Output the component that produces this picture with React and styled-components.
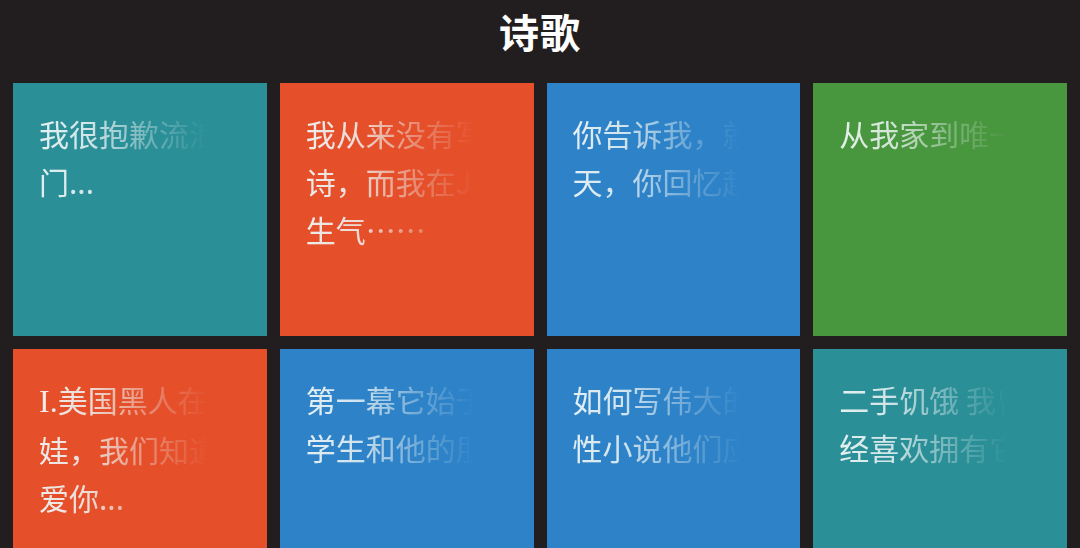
import React from "react";
import styled, { createGlobalStyle } from "styled-components";

const GlobalStyle = createGlobalStyle`
  html, body {
    margin: 0;
    padding: 0;
    background: #221e1f;
  }
  body {
    font-family: "Noto Sans CJK SC", "Noto Sans", sans-serif;
  }
`;

const Page = styled.div`
  width: 1080px;
  height: 548px;
  overflow: hidden;
  background: #221e1f;
`;

const Header = styled.header`
  height: 83px;
  display: flex;
  align-items: center;
  justify-content: center;
  padding-bottom: 22px;
  box-sizing: border-box;
`;

const Title = styled.h1`
  margin: 0;
  color: #ffffff;
  font-size: 40px;
  font-weight: 700;
  letter-spacing: 1px;
`;

const Grid = styled.div`
  display: grid;
  grid-template-columns: repeat(4, 1fr);
  grid-auto-rows: 253px;
  gap: 13px;
  padding: 0 13px;
`;

const Tile = styled.div`
  background: ${(p) => p.color};
  padding: 26px;
  box-sizing: border-box;
`;

const Excerpt = styled.div`
  width: 168px;
  color: #eef5f5;
  font-size: 30px;
  line-height: 48px;
  -webkit-mask-image: linear-gradient(to right, rgba(0,0,0,0.95) 0%, rgba(0,0,0,0.85) 30%, rgba(0,0,0,0.3) 70%, rgba(0,0,0,0) 100%);
  mask-image: linear-gradient(to right, rgba(0,0,0,0.95) 0%, rgba(0,0,0,0.85) 30%, rgba(0,0,0,0.3) 70%, rgba(0,0,0,0) 100%);
`;

const Line = styled.div`
  white-space: nowrap;
  overflow: hidden;
`;

const Roman = styled.span`
  font-family: "Liberation Serif", serif;
  font-size: 32px;
`;

const poems = [
  { color: "#2b8f98", lines: ["我很抱歉流浪的", "门..."] },
  { color: "#e5502b", lines: ["我从来没有写过", "诗，而我在JJ", "生气……"] },
  { color: "#2e83c8", lines: ["你告诉我，就在", "天，你回忆起"] },
  { color: "#48963e", lines: ["从我家到唯一的"] },
  { color: "#e5502b", lines: [[<Roman key="r">I.</Roman>, "美国黑人在"], "娃，我们知道", "爱你..."] },
  { color: "#2e83c8", lines: ["第一幕它始于", "学生和他的朋"] },
  { color: "#2e83c8", lines: ["如何写伟大的", "性小说他们应"] },
  { color: "#2b8f98", lines: ["二手饥饿 我曾", "经喜欢拥有它"] },
];

export default function App() {
  return (
    <Page>
      <GlobalStyle />
      <Header>
        <Title>诗歌</Title>
      </Header>
      <Grid>
        {poems.map((poem, i) => (
          <Tile key={i} color={poem.color}>
            <Excerpt>
              {poem.lines.map((line, j) => (
                <Line key={j}>{line}</Line>
              ))}
            </Excerpt>
          </Tile>
        ))}
      </Grid>
    </Page>
  );
}
